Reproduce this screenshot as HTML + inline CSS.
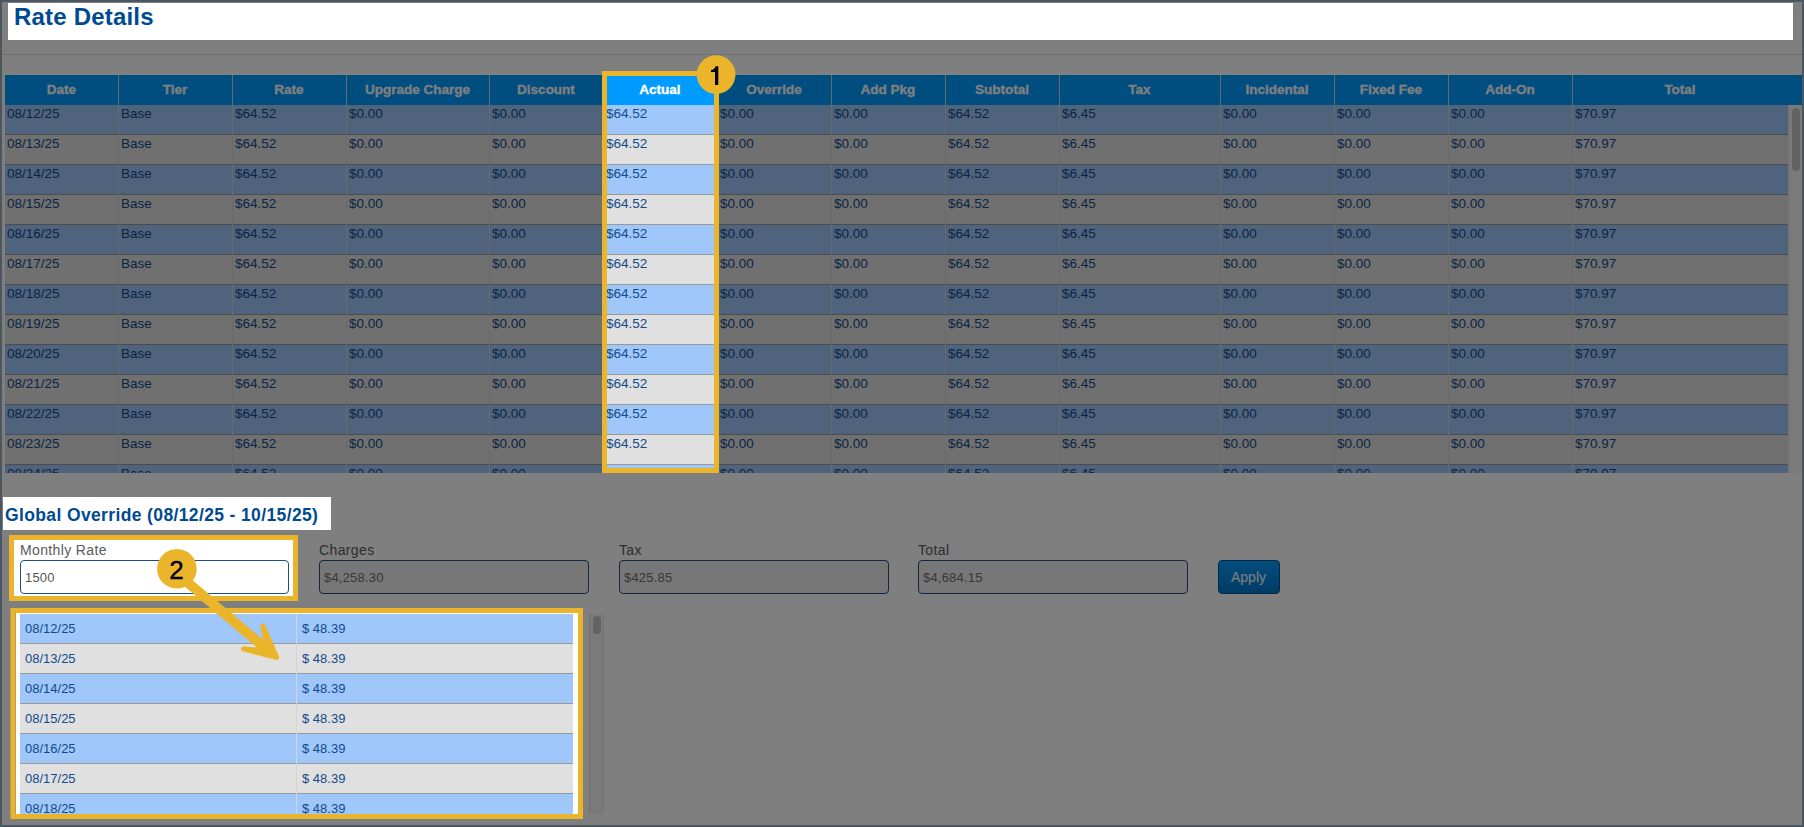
<!DOCTYPE html>
<html><head><meta charset="utf-8"><title>Rate Details</title>
<style>
html,body{margin:0;padding:0;width:1804px;height:827px;overflow:hidden;background:#4a5660}
body{position:relative;font-family:"Liberation Sans", sans-serif}
.r{position:absolute}
.t{position:absolute;white-space:nowrap;font-family:"Liberation Sans", sans-serif}
</style></head><body>
<div class="r" style="left:0px;top:0px;width:1804px;height:827px;background:#4a5660;"></div>
<div class="r" style="left:2px;top:2px;width:1800px;height:823px;background:#ffffff;"></div>
<div class="t" style="left:14px;top:-1.32px;font-size:24px;line-height:36px;color:#004a91;font-weight:bold;letter-spacing:0.2px">Rate Details</div>
<div class="r" style="left:2px;top:54px;width:1800px;height:1px;background:#e0e0e0;"></div>
<div class="r" style="left:5px;top:75px;width:1797px;height:30px;background:#009bff;"></div>
<div class="t" style="left:5px;top:75px;width:113px;height:30px;line-height:30px;text-align:center;font-size:13.5px;font-weight:bold;color:#fff;-webkit-text-stroke:0.3px #fff">Date</div>
<div class="t" style="left:118px;top:75px;width:114px;height:30px;line-height:30px;text-align:center;font-size:13.5px;font-weight:bold;color:#fff;-webkit-text-stroke:0.3px #fff">Tier</div>
<div class="t" style="left:232px;top:75px;width:114px;height:30px;line-height:30px;text-align:center;font-size:13.5px;font-weight:bold;color:#fff;-webkit-text-stroke:0.3px #fff">Rate</div>
<div class="t" style="left:346px;top:75px;width:143px;height:30px;line-height:30px;text-align:center;font-size:13.5px;font-weight:bold;color:#fff;-webkit-text-stroke:0.3px #fff">Upgrade Charge</div>
<div class="t" style="left:489px;top:75px;width:114px;height:30px;line-height:30px;text-align:center;font-size:13.5px;font-weight:bold;color:#fff;-webkit-text-stroke:0.3px #fff">Discount</div>
<div class="t" style="left:603px;top:75px;width:114px;height:30px;line-height:30px;text-align:center;font-size:13.5px;font-weight:bold;color:#fff;-webkit-text-stroke:0.3px #fff">Actual</div>
<div class="t" style="left:717px;top:75px;width:114px;height:30px;line-height:30px;text-align:center;font-size:13.5px;font-weight:bold;color:#fff;-webkit-text-stroke:0.3px #fff">Override</div>
<div class="t" style="left:831px;top:75px;width:114px;height:30px;line-height:30px;text-align:center;font-size:13.5px;font-weight:bold;color:#fff;-webkit-text-stroke:0.3px #fff">Add Pkg</div>
<div class="t" style="left:945px;top:75px;width:114px;height:30px;line-height:30px;text-align:center;font-size:13.5px;font-weight:bold;color:#fff;-webkit-text-stroke:0.3px #fff">Subtotal</div>
<div class="t" style="left:1059px;top:75px;width:161px;height:30px;line-height:30px;text-align:center;font-size:13.5px;font-weight:bold;color:#fff;-webkit-text-stroke:0.3px #fff">Tax</div>
<div class="t" style="left:1220px;top:75px;width:114px;height:30px;line-height:30px;text-align:center;font-size:13.5px;font-weight:bold;color:#fff;-webkit-text-stroke:0.3px #fff">Incidental</div>
<div class="t" style="left:1334px;top:75px;width:114px;height:30px;line-height:30px;text-align:center;font-size:13.5px;font-weight:bold;color:#fff;-webkit-text-stroke:0.3px #fff">Fixed Fee</div>
<div class="t" style="left:1448px;top:75px;width:124px;height:30px;line-height:30px;text-align:center;font-size:13.5px;font-weight:bold;color:#fff;-webkit-text-stroke:0.3px #fff">Add-On</div>
<div class="t" style="left:1572px;top:75px;width:216px;height:30px;line-height:30px;text-align:center;font-size:13.5px;font-weight:bold;color:#fff;-webkit-text-stroke:0.3px #fff">Total</div>
<div class="r" style="left:118px;top:75px;width:1px;height:30px;background:#d4d4d4;"></div>
<div class="r" style="left:232px;top:75px;width:1px;height:30px;background:#d4d4d4;"></div>
<div class="r" style="left:346px;top:75px;width:1px;height:30px;background:#d4d4d4;"></div>
<div class="r" style="left:489px;top:75px;width:1px;height:30px;background:#d4d4d4;"></div>
<div class="r" style="left:603px;top:75px;width:1px;height:30px;background:#d4d4d4;"></div>
<div class="r" style="left:717px;top:75px;width:1px;height:30px;background:#d4d4d4;"></div>
<div class="r" style="left:831px;top:75px;width:1px;height:30px;background:#d4d4d4;"></div>
<div class="r" style="left:945px;top:75px;width:1px;height:30px;background:#d4d4d4;"></div>
<div class="r" style="left:1059px;top:75px;width:1px;height:30px;background:#d4d4d4;"></div>
<div class="r" style="left:1220px;top:75px;width:1px;height:30px;background:#d4d4d4;"></div>
<div class="r" style="left:1334px;top:75px;width:1px;height:30px;background:#d4d4d4;"></div>
<div class="r" style="left:1448px;top:75px;width:1px;height:30px;background:#d4d4d4;"></div>
<div class="r" style="left:1572px;top:75px;width:1px;height:30px;background:#d4d4d4;"></div>
<div class="r" style="left:0;top:105px;width:1788px;height:368px;overflow:hidden">
<div class="r" style="left:5px;top:0px;width:1783px;height:29px;background:#9fc7fa"></div>
<div class="r" style="left:5px;top:29px;width:1783px;height:1px;background:#999999"></div>
<div class="t" style="left:7px;top:-0.68px;font-size:13.5px;line-height:20px;color:#124b8b">08/12/25</div>
<div class="t" style="left:121px;top:-0.68px;font-size:13.5px;line-height:20px;color:#124b8b">Base</div>
<div class="t" style="left:235px;top:-0.68px;font-size:13.5px;line-height:20px;color:#124b8b">$64.52</div>
<div class="t" style="left:349px;top:-0.68px;font-size:13.5px;line-height:20px;color:#124b8b">$0.00</div>
<div class="t" style="left:492px;top:-0.68px;font-size:13.5px;line-height:20px;color:#124b8b">$0.00</div>
<div class="t" style="left:606px;top:-0.68px;font-size:13.5px;line-height:20px;color:#124b8b">$64.52</div>
<div class="t" style="left:720px;top:-0.68px;font-size:13.5px;line-height:20px;color:#124b8b">$0.00</div>
<div class="t" style="left:834px;top:-0.68px;font-size:13.5px;line-height:20px;color:#124b8b">$0.00</div>
<div class="t" style="left:948px;top:-0.68px;font-size:13.5px;line-height:20px;color:#124b8b">$64.52</div>
<div class="t" style="left:1062px;top:-0.68px;font-size:13.5px;line-height:20px;color:#124b8b">$6.45</div>
<div class="t" style="left:1223px;top:-0.68px;font-size:13.5px;line-height:20px;color:#124b8b">$0.00</div>
<div class="t" style="left:1337px;top:-0.68px;font-size:13.5px;line-height:20px;color:#124b8b">$0.00</div>
<div class="t" style="left:1451px;top:-0.68px;font-size:13.5px;line-height:20px;color:#124b8b">$0.00</div>
<div class="t" style="left:1575px;top:-0.68px;font-size:13.5px;line-height:20px;color:#124b8b">$70.97</div>
<div class="r" style="left:5px;top:30px;width:1783px;height:29px;background:#e0e0e0"></div>
<div class="r" style="left:5px;top:59px;width:1783px;height:1px;background:#999999"></div>
<div class="t" style="left:7px;top:29.32px;font-size:13.5px;line-height:20px;color:#124b8b">08/13/25</div>
<div class="t" style="left:121px;top:29.32px;font-size:13.5px;line-height:20px;color:#124b8b">Base</div>
<div class="t" style="left:235px;top:29.32px;font-size:13.5px;line-height:20px;color:#124b8b">$64.52</div>
<div class="t" style="left:349px;top:29.32px;font-size:13.5px;line-height:20px;color:#124b8b">$0.00</div>
<div class="t" style="left:492px;top:29.32px;font-size:13.5px;line-height:20px;color:#124b8b">$0.00</div>
<div class="t" style="left:606px;top:29.32px;font-size:13.5px;line-height:20px;color:#124b8b">$64.52</div>
<div class="t" style="left:720px;top:29.32px;font-size:13.5px;line-height:20px;color:#124b8b">$0.00</div>
<div class="t" style="left:834px;top:29.32px;font-size:13.5px;line-height:20px;color:#124b8b">$0.00</div>
<div class="t" style="left:948px;top:29.32px;font-size:13.5px;line-height:20px;color:#124b8b">$64.52</div>
<div class="t" style="left:1062px;top:29.32px;font-size:13.5px;line-height:20px;color:#124b8b">$6.45</div>
<div class="t" style="left:1223px;top:29.32px;font-size:13.5px;line-height:20px;color:#124b8b">$0.00</div>
<div class="t" style="left:1337px;top:29.32px;font-size:13.5px;line-height:20px;color:#124b8b">$0.00</div>
<div class="t" style="left:1451px;top:29.32px;font-size:13.5px;line-height:20px;color:#124b8b">$0.00</div>
<div class="t" style="left:1575px;top:29.32px;font-size:13.5px;line-height:20px;color:#124b8b">$70.97</div>
<div class="r" style="left:5px;top:60px;width:1783px;height:29px;background:#9fc7fa"></div>
<div class="r" style="left:5px;top:89px;width:1783px;height:1px;background:#999999"></div>
<div class="t" style="left:7px;top:59.32px;font-size:13.5px;line-height:20px;color:#124b8b">08/14/25</div>
<div class="t" style="left:121px;top:59.32px;font-size:13.5px;line-height:20px;color:#124b8b">Base</div>
<div class="t" style="left:235px;top:59.32px;font-size:13.5px;line-height:20px;color:#124b8b">$64.52</div>
<div class="t" style="left:349px;top:59.32px;font-size:13.5px;line-height:20px;color:#124b8b">$0.00</div>
<div class="t" style="left:492px;top:59.32px;font-size:13.5px;line-height:20px;color:#124b8b">$0.00</div>
<div class="t" style="left:606px;top:59.32px;font-size:13.5px;line-height:20px;color:#124b8b">$64.52</div>
<div class="t" style="left:720px;top:59.32px;font-size:13.5px;line-height:20px;color:#124b8b">$0.00</div>
<div class="t" style="left:834px;top:59.32px;font-size:13.5px;line-height:20px;color:#124b8b">$0.00</div>
<div class="t" style="left:948px;top:59.32px;font-size:13.5px;line-height:20px;color:#124b8b">$64.52</div>
<div class="t" style="left:1062px;top:59.32px;font-size:13.5px;line-height:20px;color:#124b8b">$6.45</div>
<div class="t" style="left:1223px;top:59.32px;font-size:13.5px;line-height:20px;color:#124b8b">$0.00</div>
<div class="t" style="left:1337px;top:59.32px;font-size:13.5px;line-height:20px;color:#124b8b">$0.00</div>
<div class="t" style="left:1451px;top:59.32px;font-size:13.5px;line-height:20px;color:#124b8b">$0.00</div>
<div class="t" style="left:1575px;top:59.32px;font-size:13.5px;line-height:20px;color:#124b8b">$70.97</div>
<div class="r" style="left:5px;top:90px;width:1783px;height:29px;background:#e0e0e0"></div>
<div class="r" style="left:5px;top:119px;width:1783px;height:1px;background:#999999"></div>
<div class="t" style="left:7px;top:89.32px;font-size:13.5px;line-height:20px;color:#124b8b">08/15/25</div>
<div class="t" style="left:121px;top:89.32px;font-size:13.5px;line-height:20px;color:#124b8b">Base</div>
<div class="t" style="left:235px;top:89.32px;font-size:13.5px;line-height:20px;color:#124b8b">$64.52</div>
<div class="t" style="left:349px;top:89.32px;font-size:13.5px;line-height:20px;color:#124b8b">$0.00</div>
<div class="t" style="left:492px;top:89.32px;font-size:13.5px;line-height:20px;color:#124b8b">$0.00</div>
<div class="t" style="left:606px;top:89.32px;font-size:13.5px;line-height:20px;color:#124b8b">$64.52</div>
<div class="t" style="left:720px;top:89.32px;font-size:13.5px;line-height:20px;color:#124b8b">$0.00</div>
<div class="t" style="left:834px;top:89.32px;font-size:13.5px;line-height:20px;color:#124b8b">$0.00</div>
<div class="t" style="left:948px;top:89.32px;font-size:13.5px;line-height:20px;color:#124b8b">$64.52</div>
<div class="t" style="left:1062px;top:89.32px;font-size:13.5px;line-height:20px;color:#124b8b">$6.45</div>
<div class="t" style="left:1223px;top:89.32px;font-size:13.5px;line-height:20px;color:#124b8b">$0.00</div>
<div class="t" style="left:1337px;top:89.32px;font-size:13.5px;line-height:20px;color:#124b8b">$0.00</div>
<div class="t" style="left:1451px;top:89.32px;font-size:13.5px;line-height:20px;color:#124b8b">$0.00</div>
<div class="t" style="left:1575px;top:89.32px;font-size:13.5px;line-height:20px;color:#124b8b">$70.97</div>
<div class="r" style="left:5px;top:120px;width:1783px;height:29px;background:#9fc7fa"></div>
<div class="r" style="left:5px;top:149px;width:1783px;height:1px;background:#999999"></div>
<div class="t" style="left:7px;top:119.32px;font-size:13.5px;line-height:20px;color:#124b8b">08/16/25</div>
<div class="t" style="left:121px;top:119.32px;font-size:13.5px;line-height:20px;color:#124b8b">Base</div>
<div class="t" style="left:235px;top:119.32px;font-size:13.5px;line-height:20px;color:#124b8b">$64.52</div>
<div class="t" style="left:349px;top:119.32px;font-size:13.5px;line-height:20px;color:#124b8b">$0.00</div>
<div class="t" style="left:492px;top:119.32px;font-size:13.5px;line-height:20px;color:#124b8b">$0.00</div>
<div class="t" style="left:606px;top:119.32px;font-size:13.5px;line-height:20px;color:#124b8b">$64.52</div>
<div class="t" style="left:720px;top:119.32px;font-size:13.5px;line-height:20px;color:#124b8b">$0.00</div>
<div class="t" style="left:834px;top:119.32px;font-size:13.5px;line-height:20px;color:#124b8b">$0.00</div>
<div class="t" style="left:948px;top:119.32px;font-size:13.5px;line-height:20px;color:#124b8b">$64.52</div>
<div class="t" style="left:1062px;top:119.32px;font-size:13.5px;line-height:20px;color:#124b8b">$6.45</div>
<div class="t" style="left:1223px;top:119.32px;font-size:13.5px;line-height:20px;color:#124b8b">$0.00</div>
<div class="t" style="left:1337px;top:119.32px;font-size:13.5px;line-height:20px;color:#124b8b">$0.00</div>
<div class="t" style="left:1451px;top:119.32px;font-size:13.5px;line-height:20px;color:#124b8b">$0.00</div>
<div class="t" style="left:1575px;top:119.32px;font-size:13.5px;line-height:20px;color:#124b8b">$70.97</div>
<div class="r" style="left:5px;top:150px;width:1783px;height:29px;background:#e0e0e0"></div>
<div class="r" style="left:5px;top:179px;width:1783px;height:1px;background:#999999"></div>
<div class="t" style="left:7px;top:149.32px;font-size:13.5px;line-height:20px;color:#124b8b">08/17/25</div>
<div class="t" style="left:121px;top:149.32px;font-size:13.5px;line-height:20px;color:#124b8b">Base</div>
<div class="t" style="left:235px;top:149.32px;font-size:13.5px;line-height:20px;color:#124b8b">$64.52</div>
<div class="t" style="left:349px;top:149.32px;font-size:13.5px;line-height:20px;color:#124b8b">$0.00</div>
<div class="t" style="left:492px;top:149.32px;font-size:13.5px;line-height:20px;color:#124b8b">$0.00</div>
<div class="t" style="left:606px;top:149.32px;font-size:13.5px;line-height:20px;color:#124b8b">$64.52</div>
<div class="t" style="left:720px;top:149.32px;font-size:13.5px;line-height:20px;color:#124b8b">$0.00</div>
<div class="t" style="left:834px;top:149.32px;font-size:13.5px;line-height:20px;color:#124b8b">$0.00</div>
<div class="t" style="left:948px;top:149.32px;font-size:13.5px;line-height:20px;color:#124b8b">$64.52</div>
<div class="t" style="left:1062px;top:149.32px;font-size:13.5px;line-height:20px;color:#124b8b">$6.45</div>
<div class="t" style="left:1223px;top:149.32px;font-size:13.5px;line-height:20px;color:#124b8b">$0.00</div>
<div class="t" style="left:1337px;top:149.32px;font-size:13.5px;line-height:20px;color:#124b8b">$0.00</div>
<div class="t" style="left:1451px;top:149.32px;font-size:13.5px;line-height:20px;color:#124b8b">$0.00</div>
<div class="t" style="left:1575px;top:149.32px;font-size:13.5px;line-height:20px;color:#124b8b">$70.97</div>
<div class="r" style="left:5px;top:180px;width:1783px;height:29px;background:#9fc7fa"></div>
<div class="r" style="left:5px;top:209px;width:1783px;height:1px;background:#999999"></div>
<div class="t" style="left:7px;top:179.32px;font-size:13.5px;line-height:20px;color:#124b8b">08/18/25</div>
<div class="t" style="left:121px;top:179.32px;font-size:13.5px;line-height:20px;color:#124b8b">Base</div>
<div class="t" style="left:235px;top:179.32px;font-size:13.5px;line-height:20px;color:#124b8b">$64.52</div>
<div class="t" style="left:349px;top:179.32px;font-size:13.5px;line-height:20px;color:#124b8b">$0.00</div>
<div class="t" style="left:492px;top:179.32px;font-size:13.5px;line-height:20px;color:#124b8b">$0.00</div>
<div class="t" style="left:606px;top:179.32px;font-size:13.5px;line-height:20px;color:#124b8b">$64.52</div>
<div class="t" style="left:720px;top:179.32px;font-size:13.5px;line-height:20px;color:#124b8b">$0.00</div>
<div class="t" style="left:834px;top:179.32px;font-size:13.5px;line-height:20px;color:#124b8b">$0.00</div>
<div class="t" style="left:948px;top:179.32px;font-size:13.5px;line-height:20px;color:#124b8b">$64.52</div>
<div class="t" style="left:1062px;top:179.32px;font-size:13.5px;line-height:20px;color:#124b8b">$6.45</div>
<div class="t" style="left:1223px;top:179.32px;font-size:13.5px;line-height:20px;color:#124b8b">$0.00</div>
<div class="t" style="left:1337px;top:179.32px;font-size:13.5px;line-height:20px;color:#124b8b">$0.00</div>
<div class="t" style="left:1451px;top:179.32px;font-size:13.5px;line-height:20px;color:#124b8b">$0.00</div>
<div class="t" style="left:1575px;top:179.32px;font-size:13.5px;line-height:20px;color:#124b8b">$70.97</div>
<div class="r" style="left:5px;top:210px;width:1783px;height:29px;background:#e0e0e0"></div>
<div class="r" style="left:5px;top:239px;width:1783px;height:1px;background:#999999"></div>
<div class="t" style="left:7px;top:209.32px;font-size:13.5px;line-height:20px;color:#124b8b">08/19/25</div>
<div class="t" style="left:121px;top:209.32px;font-size:13.5px;line-height:20px;color:#124b8b">Base</div>
<div class="t" style="left:235px;top:209.32px;font-size:13.5px;line-height:20px;color:#124b8b">$64.52</div>
<div class="t" style="left:349px;top:209.32px;font-size:13.5px;line-height:20px;color:#124b8b">$0.00</div>
<div class="t" style="left:492px;top:209.32px;font-size:13.5px;line-height:20px;color:#124b8b">$0.00</div>
<div class="t" style="left:606px;top:209.32px;font-size:13.5px;line-height:20px;color:#124b8b">$64.52</div>
<div class="t" style="left:720px;top:209.32px;font-size:13.5px;line-height:20px;color:#124b8b">$0.00</div>
<div class="t" style="left:834px;top:209.32px;font-size:13.5px;line-height:20px;color:#124b8b">$0.00</div>
<div class="t" style="left:948px;top:209.32px;font-size:13.5px;line-height:20px;color:#124b8b">$64.52</div>
<div class="t" style="left:1062px;top:209.32px;font-size:13.5px;line-height:20px;color:#124b8b">$6.45</div>
<div class="t" style="left:1223px;top:209.32px;font-size:13.5px;line-height:20px;color:#124b8b">$0.00</div>
<div class="t" style="left:1337px;top:209.32px;font-size:13.5px;line-height:20px;color:#124b8b">$0.00</div>
<div class="t" style="left:1451px;top:209.32px;font-size:13.5px;line-height:20px;color:#124b8b">$0.00</div>
<div class="t" style="left:1575px;top:209.32px;font-size:13.5px;line-height:20px;color:#124b8b">$70.97</div>
<div class="r" style="left:5px;top:240px;width:1783px;height:29px;background:#9fc7fa"></div>
<div class="r" style="left:5px;top:269px;width:1783px;height:1px;background:#999999"></div>
<div class="t" style="left:7px;top:239.32px;font-size:13.5px;line-height:20px;color:#124b8b">08/20/25</div>
<div class="t" style="left:121px;top:239.32px;font-size:13.5px;line-height:20px;color:#124b8b">Base</div>
<div class="t" style="left:235px;top:239.32px;font-size:13.5px;line-height:20px;color:#124b8b">$64.52</div>
<div class="t" style="left:349px;top:239.32px;font-size:13.5px;line-height:20px;color:#124b8b">$0.00</div>
<div class="t" style="left:492px;top:239.32px;font-size:13.5px;line-height:20px;color:#124b8b">$0.00</div>
<div class="t" style="left:606px;top:239.32px;font-size:13.5px;line-height:20px;color:#124b8b">$64.52</div>
<div class="t" style="left:720px;top:239.32px;font-size:13.5px;line-height:20px;color:#124b8b">$0.00</div>
<div class="t" style="left:834px;top:239.32px;font-size:13.5px;line-height:20px;color:#124b8b">$0.00</div>
<div class="t" style="left:948px;top:239.32px;font-size:13.5px;line-height:20px;color:#124b8b">$64.52</div>
<div class="t" style="left:1062px;top:239.32px;font-size:13.5px;line-height:20px;color:#124b8b">$6.45</div>
<div class="t" style="left:1223px;top:239.32px;font-size:13.5px;line-height:20px;color:#124b8b">$0.00</div>
<div class="t" style="left:1337px;top:239.32px;font-size:13.5px;line-height:20px;color:#124b8b">$0.00</div>
<div class="t" style="left:1451px;top:239.32px;font-size:13.5px;line-height:20px;color:#124b8b">$0.00</div>
<div class="t" style="left:1575px;top:239.32px;font-size:13.5px;line-height:20px;color:#124b8b">$70.97</div>
<div class="r" style="left:5px;top:270px;width:1783px;height:29px;background:#e0e0e0"></div>
<div class="r" style="left:5px;top:299px;width:1783px;height:1px;background:#999999"></div>
<div class="t" style="left:7px;top:269.32px;font-size:13.5px;line-height:20px;color:#124b8b">08/21/25</div>
<div class="t" style="left:121px;top:269.32px;font-size:13.5px;line-height:20px;color:#124b8b">Base</div>
<div class="t" style="left:235px;top:269.32px;font-size:13.5px;line-height:20px;color:#124b8b">$64.52</div>
<div class="t" style="left:349px;top:269.32px;font-size:13.5px;line-height:20px;color:#124b8b">$0.00</div>
<div class="t" style="left:492px;top:269.32px;font-size:13.5px;line-height:20px;color:#124b8b">$0.00</div>
<div class="t" style="left:606px;top:269.32px;font-size:13.5px;line-height:20px;color:#124b8b">$64.52</div>
<div class="t" style="left:720px;top:269.32px;font-size:13.5px;line-height:20px;color:#124b8b">$0.00</div>
<div class="t" style="left:834px;top:269.32px;font-size:13.5px;line-height:20px;color:#124b8b">$0.00</div>
<div class="t" style="left:948px;top:269.32px;font-size:13.5px;line-height:20px;color:#124b8b">$64.52</div>
<div class="t" style="left:1062px;top:269.32px;font-size:13.5px;line-height:20px;color:#124b8b">$6.45</div>
<div class="t" style="left:1223px;top:269.32px;font-size:13.5px;line-height:20px;color:#124b8b">$0.00</div>
<div class="t" style="left:1337px;top:269.32px;font-size:13.5px;line-height:20px;color:#124b8b">$0.00</div>
<div class="t" style="left:1451px;top:269.32px;font-size:13.5px;line-height:20px;color:#124b8b">$0.00</div>
<div class="t" style="left:1575px;top:269.32px;font-size:13.5px;line-height:20px;color:#124b8b">$70.97</div>
<div class="r" style="left:5px;top:300px;width:1783px;height:29px;background:#9fc7fa"></div>
<div class="r" style="left:5px;top:329px;width:1783px;height:1px;background:#999999"></div>
<div class="t" style="left:7px;top:299.32px;font-size:13.5px;line-height:20px;color:#124b8b">08/22/25</div>
<div class="t" style="left:121px;top:299.32px;font-size:13.5px;line-height:20px;color:#124b8b">Base</div>
<div class="t" style="left:235px;top:299.32px;font-size:13.5px;line-height:20px;color:#124b8b">$64.52</div>
<div class="t" style="left:349px;top:299.32px;font-size:13.5px;line-height:20px;color:#124b8b">$0.00</div>
<div class="t" style="left:492px;top:299.32px;font-size:13.5px;line-height:20px;color:#124b8b">$0.00</div>
<div class="t" style="left:606px;top:299.32px;font-size:13.5px;line-height:20px;color:#124b8b">$64.52</div>
<div class="t" style="left:720px;top:299.32px;font-size:13.5px;line-height:20px;color:#124b8b">$0.00</div>
<div class="t" style="left:834px;top:299.32px;font-size:13.5px;line-height:20px;color:#124b8b">$0.00</div>
<div class="t" style="left:948px;top:299.32px;font-size:13.5px;line-height:20px;color:#124b8b">$64.52</div>
<div class="t" style="left:1062px;top:299.32px;font-size:13.5px;line-height:20px;color:#124b8b">$6.45</div>
<div class="t" style="left:1223px;top:299.32px;font-size:13.5px;line-height:20px;color:#124b8b">$0.00</div>
<div class="t" style="left:1337px;top:299.32px;font-size:13.5px;line-height:20px;color:#124b8b">$0.00</div>
<div class="t" style="left:1451px;top:299.32px;font-size:13.5px;line-height:20px;color:#124b8b">$0.00</div>
<div class="t" style="left:1575px;top:299.32px;font-size:13.5px;line-height:20px;color:#124b8b">$70.97</div>
<div class="r" style="left:5px;top:330px;width:1783px;height:29px;background:#e0e0e0"></div>
<div class="r" style="left:5px;top:359px;width:1783px;height:1px;background:#999999"></div>
<div class="t" style="left:7px;top:329.32px;font-size:13.5px;line-height:20px;color:#124b8b">08/23/25</div>
<div class="t" style="left:121px;top:329.32px;font-size:13.5px;line-height:20px;color:#124b8b">Base</div>
<div class="t" style="left:235px;top:329.32px;font-size:13.5px;line-height:20px;color:#124b8b">$64.52</div>
<div class="t" style="left:349px;top:329.32px;font-size:13.5px;line-height:20px;color:#124b8b">$0.00</div>
<div class="t" style="left:492px;top:329.32px;font-size:13.5px;line-height:20px;color:#124b8b">$0.00</div>
<div class="t" style="left:606px;top:329.32px;font-size:13.5px;line-height:20px;color:#124b8b">$64.52</div>
<div class="t" style="left:720px;top:329.32px;font-size:13.5px;line-height:20px;color:#124b8b">$0.00</div>
<div class="t" style="left:834px;top:329.32px;font-size:13.5px;line-height:20px;color:#124b8b">$0.00</div>
<div class="t" style="left:948px;top:329.32px;font-size:13.5px;line-height:20px;color:#124b8b">$64.52</div>
<div class="t" style="left:1062px;top:329.32px;font-size:13.5px;line-height:20px;color:#124b8b">$6.45</div>
<div class="t" style="left:1223px;top:329.32px;font-size:13.5px;line-height:20px;color:#124b8b">$0.00</div>
<div class="t" style="left:1337px;top:329.32px;font-size:13.5px;line-height:20px;color:#124b8b">$0.00</div>
<div class="t" style="left:1451px;top:329.32px;font-size:13.5px;line-height:20px;color:#124b8b">$0.00</div>
<div class="t" style="left:1575px;top:329.32px;font-size:13.5px;line-height:20px;color:#124b8b">$70.97</div>
<div class="r" style="left:5px;top:360px;width:1783px;height:29px;background:#9fc7fa"></div>
<div class="r" style="left:5px;top:389px;width:1783px;height:1px;background:#999999"></div>
<div class="t" style="left:7px;top:359.32px;font-size:13.5px;line-height:20px;color:#124b8b">08/24/25</div>
<div class="t" style="left:121px;top:359.32px;font-size:13.5px;line-height:20px;color:#124b8b">Base</div>
<div class="t" style="left:235px;top:359.32px;font-size:13.5px;line-height:20px;color:#124b8b">$64.52</div>
<div class="t" style="left:349px;top:359.32px;font-size:13.5px;line-height:20px;color:#124b8b">$0.00</div>
<div class="t" style="left:492px;top:359.32px;font-size:13.5px;line-height:20px;color:#124b8b">$0.00</div>
<div class="t" style="left:606px;top:359.32px;font-size:13.5px;line-height:20px;color:#124b8b">$64.52</div>
<div class="t" style="left:720px;top:359.32px;font-size:13.5px;line-height:20px;color:#124b8b">$0.00</div>
<div class="t" style="left:834px;top:359.32px;font-size:13.5px;line-height:20px;color:#124b8b">$0.00</div>
<div class="t" style="left:948px;top:359.32px;font-size:13.5px;line-height:20px;color:#124b8b">$64.52</div>
<div class="t" style="left:1062px;top:359.32px;font-size:13.5px;line-height:20px;color:#124b8b">$6.45</div>
<div class="t" style="left:1223px;top:359.32px;font-size:13.5px;line-height:20px;color:#124b8b">$0.00</div>
<div class="t" style="left:1337px;top:359.32px;font-size:13.5px;line-height:20px;color:#124b8b">$0.00</div>
<div class="t" style="left:1451px;top:359.32px;font-size:13.5px;line-height:20px;color:#124b8b">$0.00</div>
<div class="t" style="left:1575px;top:359.32px;font-size:13.5px;line-height:20px;color:#124b8b">$70.97</div>
<div class="r" style="left:118px;top:0;width:1px;height:368px;background:#d4d4d4"></div>
<div class="r" style="left:232px;top:0;width:1px;height:368px;background:#d4d4d4"></div>
<div class="r" style="left:346px;top:0;width:1px;height:368px;background:#d4d4d4"></div>
<div class="r" style="left:489px;top:0;width:1px;height:368px;background:#d4d4d4"></div>
<div class="r" style="left:603px;top:0;width:1px;height:368px;background:#d4d4d4"></div>
<div class="r" style="left:717px;top:0;width:1px;height:368px;background:#d4d4d4"></div>
<div class="r" style="left:831px;top:0;width:1px;height:368px;background:#d4d4d4"></div>
<div class="r" style="left:945px;top:0;width:1px;height:368px;background:#d4d4d4"></div>
<div class="r" style="left:1059px;top:0;width:1px;height:368px;background:#d4d4d4"></div>
<div class="r" style="left:1220px;top:0;width:1px;height:368px;background:#d4d4d4"></div>
<div class="r" style="left:1334px;top:0;width:1px;height:368px;background:#d4d4d4"></div>
<div class="r" style="left:1448px;top:0;width:1px;height:368px;background:#d4d4d4"></div>
<div class="r" style="left:1572px;top:0;width:1px;height:368px;background:#d4d4d4"></div>
</div>
<div class="r" style="left:1788px;top:105px;width:14px;height:368px;background:#f4f4f4;"></div>
<div class="r" style="left:1788px;top:105px;width:1px;height:368px;background:#e6e6e6;"></div>
<div class="r" style="left:1792px;top:108px;width:8px;height:63px;background:#c6c6c6;border-radius:4px"></div>
<div class="t" style="left:5px;top:501.94px;font-size:17.5px;line-height:26px;color:#004a91;font-weight:bold;letter-spacing:0.37px">Global Override (08/12/25 - 10/15/25)</div>
<div class="t" style="left:20px;top:539.65px;font-size:14px;line-height:21px;color:#5a5a5a;font-weight:normal;letter-spacing:0.37px">Monthly Rate</div>
<div class="r" style="left:20px;top:560px;width:269px;height:34px;box-sizing:border-box;border:1px solid #1a4f8a;border-radius:4px;background:#ffffff"></div>
<div class="t" style="left:25px;top:568.00px;font-size:13px;line-height:19px;color:#555555;font-weight:normal;letter-spacing:0.2px">1500</div>
<div class="t" style="left:319px;top:539.65px;font-size:14px;line-height:21px;color:#5a5a5a;font-weight:normal;letter-spacing:0.37px">Charges</div>
<div class="r" style="left:319px;top:560px;width:270px;height:34px;box-sizing:border-box;border:1px solid #1a4f8a;border-radius:4px;background:#eeeeee"></div>
<div class="t" style="left:324px;top:568.00px;font-size:13px;line-height:19px;color:#707070;font-weight:normal;letter-spacing:0.2px">$4,258.30</div>
<div class="t" style="left:619px;top:539.65px;font-size:14px;line-height:21px;color:#5a5a5a;font-weight:normal;letter-spacing:0.37px">Tax</div>
<div class="r" style="left:619px;top:560px;width:270px;height:34px;box-sizing:border-box;border:1px solid #1a4f8a;border-radius:4px;background:#eeeeee"></div>
<div class="t" style="left:624px;top:568.00px;font-size:13px;line-height:19px;color:#707070;font-weight:normal;letter-spacing:0.2px">$425.85</div>
<div class="t" style="left:918px;top:539.65px;font-size:14px;line-height:21px;color:#5a5a5a;font-weight:normal;letter-spacing:0.37px">Total</div>
<div class="r" style="left:918px;top:560px;width:270px;height:34px;box-sizing:border-box;border:1px solid #1a4f8a;border-radius:4px;background:#eeeeee"></div>
<div class="t" style="left:923px;top:568.00px;font-size:13px;line-height:19px;color:#707070;font-weight:normal;letter-spacing:0.2px">$4,684.15</div>
<div class="r" style="left:1218px;top:560px;width:62px;height:34px;box-sizing:border-box;border:1px solid #00508f;border-radius:4px;background:linear-gradient(#0a9cf8,#0078cf)"></div>
<div class="t" style="left:1231px;top:566.65px;font-size:14px;line-height:21px;color:#ffffff;font-weight:normal;">Apply</div>
<div class="r" style="left:16px;top:613px;width:562px;height:201px;background:#ffffff;"></div>
<div class="r" style="left:20px;top:614px;width:553px;height:200px;overflow:hidden">
<div class="r" style="left:0;top:0px;width:553px;height:29px;background:#9fc7fa"></div>
<div class="r" style="left:0;top:29px;width:553px;height:1px;background:#999999"></div>
<div class="t" style="left:5px;top:4.50px;font-size:13px;line-height:20px;color:#124b8b">08/12/25</div>
<div class="t" style="left:282px;top:4.50px;font-size:13px;line-height:20px;color:#124b8b">$ 48.39</div>
<div class="r" style="left:0;top:30px;width:553px;height:29px;background:#e0e0e0"></div>
<div class="r" style="left:0;top:59px;width:553px;height:1px;background:#999999"></div>
<div class="t" style="left:5px;top:34.50px;font-size:13px;line-height:20px;color:#124b8b">08/13/25</div>
<div class="t" style="left:282px;top:34.50px;font-size:13px;line-height:20px;color:#124b8b">$ 48.39</div>
<div class="r" style="left:0;top:60px;width:553px;height:29px;background:#9fc7fa"></div>
<div class="r" style="left:0;top:89px;width:553px;height:1px;background:#999999"></div>
<div class="t" style="left:5px;top:64.50px;font-size:13px;line-height:20px;color:#124b8b">08/14/25</div>
<div class="t" style="left:282px;top:64.50px;font-size:13px;line-height:20px;color:#124b8b">$ 48.39</div>
<div class="r" style="left:0;top:90px;width:553px;height:29px;background:#e0e0e0"></div>
<div class="r" style="left:0;top:119px;width:553px;height:1px;background:#999999"></div>
<div class="t" style="left:5px;top:94.50px;font-size:13px;line-height:20px;color:#124b8b">08/15/25</div>
<div class="t" style="left:282px;top:94.50px;font-size:13px;line-height:20px;color:#124b8b">$ 48.39</div>
<div class="r" style="left:0;top:120px;width:553px;height:29px;background:#9fc7fa"></div>
<div class="r" style="left:0;top:149px;width:553px;height:1px;background:#999999"></div>
<div class="t" style="left:5px;top:124.50px;font-size:13px;line-height:20px;color:#124b8b">08/16/25</div>
<div class="t" style="left:282px;top:124.50px;font-size:13px;line-height:20px;color:#124b8b">$ 48.39</div>
<div class="r" style="left:0;top:150px;width:553px;height:29px;background:#e0e0e0"></div>
<div class="r" style="left:0;top:179px;width:553px;height:1px;background:#999999"></div>
<div class="t" style="left:5px;top:154.50px;font-size:13px;line-height:20px;color:#124b8b">08/17/25</div>
<div class="t" style="left:282px;top:154.50px;font-size:13px;line-height:20px;color:#124b8b">$ 48.39</div>
<div class="r" style="left:0;top:180px;width:553px;height:29px;background:#9fc7fa"></div>
<div class="r" style="left:0;top:209px;width:553px;height:1px;background:#999999"></div>
<div class="t" style="left:5px;top:184.50px;font-size:13px;line-height:20px;color:#124b8b">08/18/25</div>
<div class="t" style="left:282px;top:184.50px;font-size:13px;line-height:20px;color:#124b8b">$ 48.39</div>
<div class="r" style="left:276px;top:0;width:1px;height:200px;background:#d4d4d4"></div>
</div>
<div class="r" style="left:589px;top:614px;width:14px;height:200px;background:#f4f4f4;"></div>
<div class="r" style="left:589px;top:614px;width:1px;height:200px;background:#e2e2e2;"></div>
<div class="r" style="left:603px;top:614px;width:1px;height:200px;background:#e8e8e8;"></div>
<div class="r" style="left:593px;top:616px;width:8px;height:18px;background:#c6c6c6;border-radius:4px"></div>
<svg class="r" style="left:0;top:0" width="1804" height="827" viewBox="0 0 1804 827">
<path d="M0 0H1804V827H0ZM8 3H1793V40H8ZM607 76H714V468H607ZM3 497H331V530H3ZM14 540H293V596H14ZM16 613H578V814H16Z" fill="rgba(0,0,0,0.5)" fill-rule="evenodd"/>
<rect x="604.5" y="73.5" width="112" height="397" fill="none" stroke="#ebb52b" stroke-width="5"/>
<rect x="11.5" y="537.5" width="284" height="61" fill="none" stroke="#ebb52b" stroke-width="5"/>
<rect x="13" y="610.5" width="567.5" height="206" fill="none" stroke="#ebb52b" stroke-width="5"/>
<circle cx="716.1" cy="74.6" r="19.4" fill="#ebb52b"/>
<path d="M715 84.9 L718.3 84.9 L718.3 66.3 L715.6 66.3 C714.9 68.6 713.4 69.9 711 70.1 L711 72 L715 72 Z" fill="#000"/>
<line x1="171.6" y1="569" x2="270" y2="652" stroke="#ebb52b" stroke-width="10"/>
<path d="M263 626.1 L276.5 657.3 L243.5 648.8 L257 650.2 L265.5 638.7 Z" fill="#ebb52b" stroke="#ebb52b" stroke-width="5.2" stroke-linejoin="round"/>
<circle cx="176.9" cy="568.8" r="19.8" fill="#ebb52b"/>
<text x="176.6" y="578.9" text-anchor="middle" style="font-family:'Liberation Sans';font-size:26px" fill="#000" stroke="#000" stroke-width="0.4">2</text>
</svg>
<div class="r" style="left:0px;top:0px;width:1804px;height:2px;background:#4a5660;"></div>
<div class="r" style="left:0px;top:0px;width:2px;height:827px;background:#4a5660;"></div>
<div class="r" style="left:1802px;top:0px;width:2px;height:827px;background:#4a5660;"></div>
<div class="r" style="left:0px;top:825px;width:1804px;height:2px;background:#4a5660;"></div>
</body></html>
